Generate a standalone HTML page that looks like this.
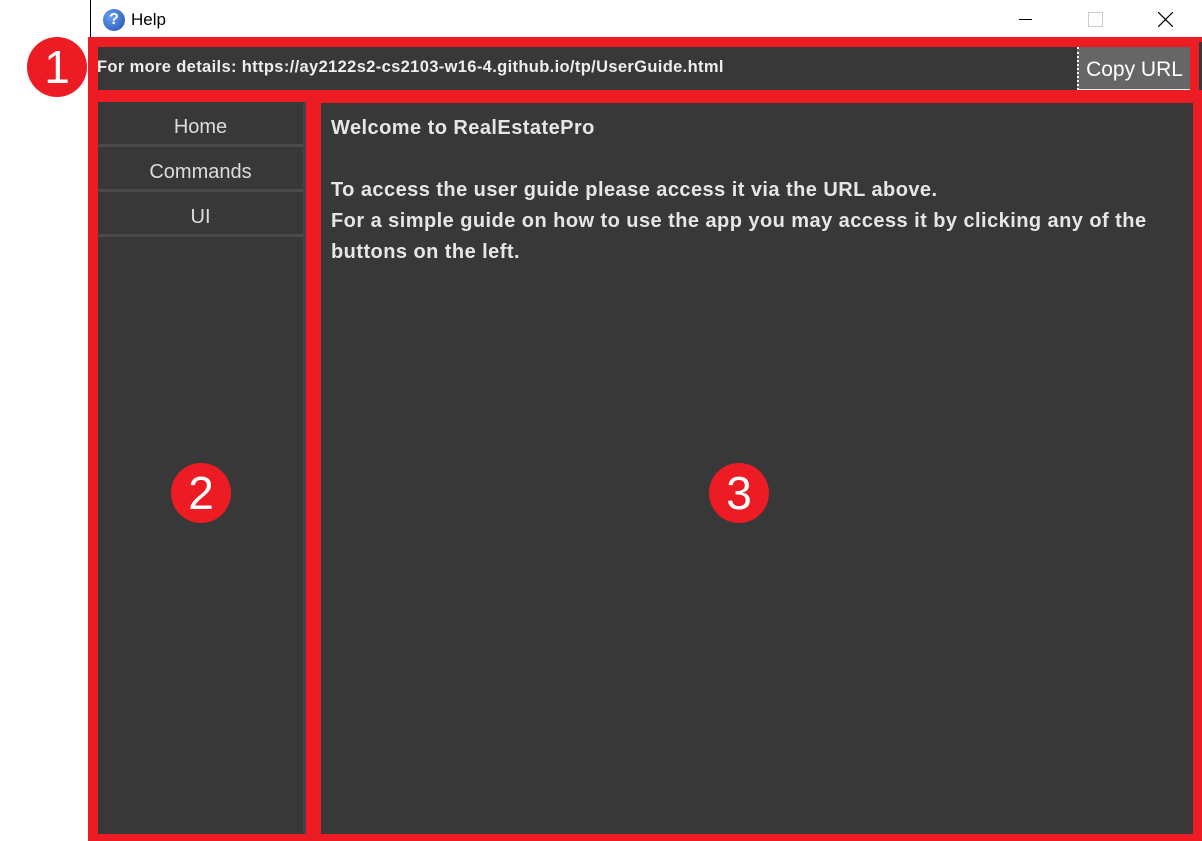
<!DOCTYPE html><html><head><style>
body{margin:0;width:1202px;height:841px;background:#fff;position:relative;overflow:hidden;font-family:"Liberation Sans",sans-serif}
.a{position:absolute}
.c{position:absolute;width:60px;height:60px;border-radius:50%;background:#ed1c24;color:#fff;font-size:46px;text-align:center;line-height:60px}
.btn{position:absolute;left:98px;width:205px;height:42px;border-bottom:3px solid #4a4a4a;color:#ddd;font-size:20px;text-align:center;line-height:50px}
</style></head><body>
<div class="a" style="left:90px;top:0;width:1px;height:37px;background:#000"></div>
<div class="a" style="left:103px;top:9px;width:22px;height:22px;border-radius:50%;background:radial-gradient(circle at 35% 35%,#6aa0f0,#1c4fb0);color:#fff;font-weight:bold;font-size:16px;text-align:center;line-height:22px">?</div>
<div class="a" style="left:131px;top:10px;font-size:17px;color:#000">Help</div>
<div class="a" style="left:1019px;top:19px;width:13px;height:1px;background:#000"></div>
<div class="a" style="left:1088px;top:12px;width:13px;height:13px;border:1px solid #ccc"></div>
<svg class="a" style="left:1158px;top:12px" width="15" height="15"><path d="M0 0L15 15M15 0L0 15" stroke="#000" stroke-width="1.2"/></svg>
<div class="a" style="left:88px;top:37px;width:1114px;height:804px;background:#ed1c24"></div>
<div class="a" style="left:98px;top:47px;width:1090px;height:43px;background:#383838"></div>
<div class="a" style="left:97px;top:58px;font-size:16.5px;letter-spacing:0.35px;font-weight:bold;color:#eee">For more details: https://ay2122s2-cs2103-w16-4.github.io/tp/UserGuide.html</div>
<div class="a" style="left:1077px;top:47px;width:111px;height:42px;background:#666;border-left:2px dotted #fff;border-bottom:1px solid #fff;color:#fff;font-size:21px;line-height:46px;text-align:center">Copy URL</div>
<div class="a" style="left:1193px;top:45px;width:9px;height:790px;background:#ed1c24"></div>
<div class="a" style="left:1199px;top:42px;width:3px;height:48px;background:#383838"></div>
<div class="a" style="left:98px;top:102px;width:205px;height:732px;background:#383838;border-right:3px solid #444"></div>
<div class="btn" style="top:102px">Home</div>
<div class="btn" style="top:147px">Commands</div>
<div class="btn" style="top:192px">UI</div>
<div class="a" style="left:321px;top:103px;width:872px;height:731px;background:#383838"></div>
<div class="a" style="left:331px;top:113px;font-size:20px;letter-spacing:0.45px;font-weight:bold;color:#e6e6e6;line-height:31px">Welcome to RealEstatePro<br><br>To access the user guide please access it via the URL above.<br>For a simple guide on how to use the app you may access it by clicking any of the<br>buttons on the left.</div>
<div class="c" style="left:27px;top:37px">1</div>
<div class="c" style="left:171px;top:463px">2</div>
<div class="c" style="left:709px;top:463px">3</div>
</body></html>
